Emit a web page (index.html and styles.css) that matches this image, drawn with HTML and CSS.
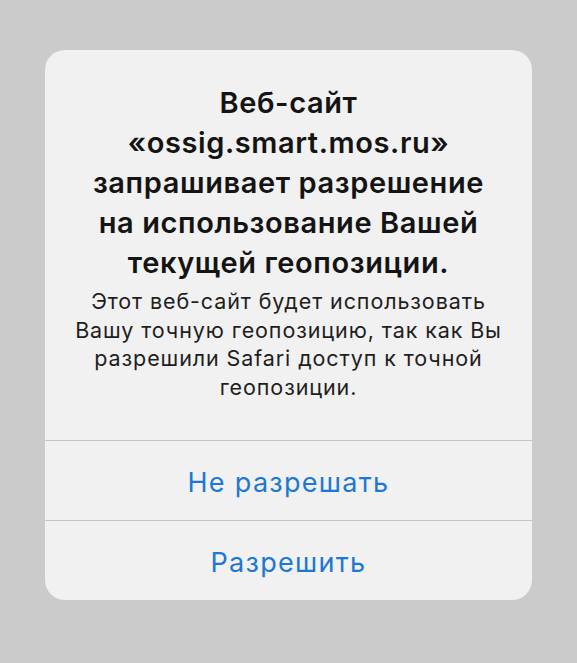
FILE: index.html
```html
<!DOCTYPE html>
<html lang="ru">
<head>
  <meta charset="UTF-8">
  <meta name="viewport" content="width=device-width, initial-scale=1.0">
  <title>Геопозиция</title>
  <link rel="stylesheet" href="styles.css">
</head>
<body>

<div class="alert">
  <div class="alert-body">
    <h1 class="alert-title">Веб-сайт<br>«ossig.smart.mos.ru»<br>запрашивает разрешение<br>на использование Вашей<br>текущей геопозиции.</h1>
    <p class="alert-text">Этот веб-сайт будет использовать<br>Вашу точную геопозицию, так как Вы<br>разрешили Safari доступ к точной<br>геопозиции.</p>
  </div>
  <button class="alert-btn" type="button">Не разрешать</button>
  <button class="alert-btn" type="button">Разрешить</button>
</div>

</body>
</html>
```

FILE: styles.css
```css
/* Page */
body {
  margin: 0;
  background-color: #cbcbcb;
  font-family: 'Inter', 'Liberation Sans', sans-serif;
}

/* Alert card */
.alert {
  width: 487px;
  margin: 50px 0 0 45px;
  background-color: #f1f1f1;
  border-radius: 20px;
  overflow: hidden;
  display: flex;
  flex-direction: column;
}

.alert-body {
  padding: 33px 10px 39px;
  text-align: center;
}

.alert-title {
  margin: 0;
  font-size: 29px;
  line-height: 40px;
  font-weight: 600;
  letter-spacing: 0.6px;
  color: #141414;
}

.alert-text {
  margin: 4px 0 0;
  font-size: 21.5px;
  line-height: 28.5px;
  letter-spacing: 0.9px;
  color: #1e1e1e;
}

/* Buttons */
.alert-btn {
  height: 80px;
  padding: 3px 0 0;
  border: none;
  border-top: 1px solid #c6c6c6;
  background: transparent;
  color: #1c78d0;
  font-family: inherit;
  font-size: 27px;
  letter-spacing: 1.3px;
  cursor: pointer;
}
```
